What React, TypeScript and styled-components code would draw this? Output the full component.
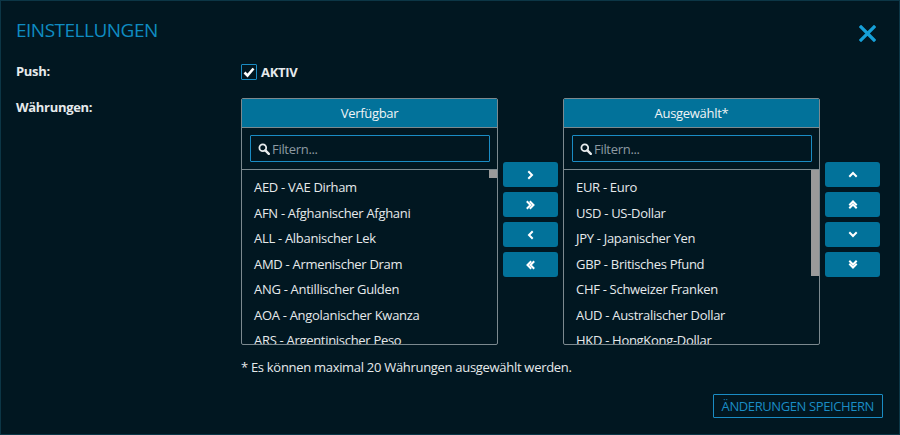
import React, { useLayoutEffect, useRef, useState } from 'react';
import styled, { createGlobalStyle } from 'styled-components';

const GlobalStyle = createGlobalStyle`
  html, body {
    margin: 0;
    padding: 0;
    background: #011721;
  }
  * {
    box-sizing: border-box;
  }
`;

const AVAILABLE = [
  'AED - VAE Dirham', 'AFN - Afghanischer Afghani', 'ALL - Albanischer Lek', 'AMD - Armenischer Dram',
  'ANG - Antillischer Gulden', 'AOA - Angolanischer Kwanza', 'ARS - Argentinischer Peso', 'AWG - Aruba-Florin',
  'AZN - Aserbaidschan-Manat', 'BAM - Konvertible Mark', 'BBD - Barbados-Dollar', 'BDT - Bangladesch-Taka',
  'BGN - Bulgarischer Lew', 'BHD - Bahrain-Dinar', 'BIF - Burundi-Franc', 'BMD - Bermuda-Dollar',
  'BND - Brunei-Dollar', 'BOB - Bolivianischer Boliviano', 'BRL - Brasilianischer Real', 'BSD - Bahama-Dollar',
  'BTN - Bhutan-Ngultrum', 'BWP - Botswanischer Pula', 'BYN - Weißrussischer Rubel', 'BZD - Belize-Dollar',
  'CDF - Kongo-Franc', 'CLP - Chilenischer Peso', 'CNY - Chinesischer Yuan', 'COP - Kolumbianischer Peso',
  'CRC - Costa-Rica-Colón', 'CUP - Kubanischer Peso', 'CVE - Kap-Verde-Escudo', 'CZK - Tschechische Krone',
  'DJF - Dschibuti-Franc', 'DOP - Dominikanischer Peso', 'DZD - Algerischer Dinar', 'EGP - Ägyptisches Pfund',
  'ERN - Eritreischer Nakfa', 'ETB - Äthiopischer Birr', 'FJD - Fidschi-Dollar', 'FKP - Falkland-Pfund',
  'GEL - Georgischer Lari', 'GHS - Ghanaischer Cedi', 'GIP - Gibraltar-Pfund', 'GMD - Gambischer Dalasi',
  'GNF - Guinea-Franc', 'GTQ - Guatemaltekischer Quetzal', 'GYD - Guyana-Dollar', 'HNL - Honduras-Lempira',
  'HRK - Kroatische Kuna', 'HTG - Haitianische Gourde', 'HUF - Ungarischer Forint', 'IDR - Indonesische Rupiah',
  'ILS - Israelischer Schekel', 'INR - Indische Rupie', 'IQD - Irakischer Dinar', 'IRR - Iranischer Rial',
  'ISK - Isländische Krone', 'JMD - Jamaika-Dollar', 'JOD - Jordanischer Dinar', 'KES - Kenia-Schilling',
  'KGS - Kirgisischer Som', 'KHR - Kambodschanischer Riel', 'KMF - Komoren-Franc', 'KPW - Nordkoreanischer Won',
  'KRW - Südkoreanischer Won', 'KWD - Kuwait-Dinar', 'KYD - Kaiman-Dollar', 'KZT - Kasachischer Tenge',
  'LAK - Laotischer Kip', 'LBP - Libanesisches Pfund', 'LKR - Sri-Lanka-Rupie', 'LRD - Liberianischer Dollar',
  'LSL - Lesothischer Loti', 'LYD - Libyscher Dinar', 'MAD - Marokkanischer Dirham', 'MDL - Moldauischer Leu',
  'MGA - Madagaskar-Ariary', 'MKD - Mazedonischer Denar', 'MMK - Myanmarischer Kyat', 'MNT - Mongolischer Tögrög',
  'MOP - Macao-Pataca', 'MRU - Mauretanischer Ouguiya', 'MUR - Mauritius-Rupie', 'MVR - Malediven-Rufiyaa',
  'MWK - Malawi-Kwacha', 'MXN - Mexikanischer Peso', 'MYR - Malaysischer Ringgit', 'MZN - Mosambik-Metical',
  'NAD - Namibia-Dollar', 'NGN - Nigerianischer Naira', 'NIO - Nicaragua-Córdoba', 'NPR - Nepalesische Rupie',
  'NZD - Neuseeland-Dollar', 'OMR - Omanischer Rial', 'PAB - Panamaischer Balboa', 'PEN - Peruanischer Sol',
  'PGK - Papua-Neuguinea-Kina', 'PHP - Philippinischer Peso', 'PKR - Pakistanische Rupie', 'PLN - Polnischer Złoty',
  'PYG - Paraguayischer Guaraní', 'QAR - Katar-Riyal', 'RON - Rumänischer Leu', 'RSD - Serbischer Dinar',
  'RUB - Russischer Rubel', 'RWF - Ruanda-Franc', 'SAR - Saudi-Rial', 'SBD - Salomonen-Dollar',
  'SCR - Seychellen-Rupie', 'SDG - Sudanesisches Pfund', 'SGD - Singapur-Dollar', 'SHP - St.-Helena-Pfund',
  'SLL - Sierra-leonischer Leone', 'SOS - Somalia-Schilling', 'SRD - Suriname-Dollar', 'SSP - Südsudanesisches Pfund',
  'STN - São-toméischer Dobra', 'SYP - Syrisches Pfund', 'SZL - Swasiländischer Lilangeni', 'THB - Thailändischer Baht',
  'TJS - Tadschikistan-Somoni', 'TMT - Turkmenistan-Manat', 'TND - Tunesischer Dinar', 'TOP - Tongaischer Paʻanga',
  'TRY - Türkische Lira', 'TTD - Trinidad-und-Tobago-Dollar', 'TWD - Neuer Taiwan-Dollar', 'TZS - Tansania-Schilling',
  'UAH - Ukrainische Hrywnja', 'UGX - Uganda-Schilling', 'UYU - Uruguayischer Peso', 'UZS - Usbekistan-Sum',
  'VES - Venezolanischer Bolívar', 'VND - Vietnamesischer Dong', 'VUV - Vanuatu-Vatu', 'WST - Samoanischer Tala',
  'XAF - CFA-Franc BEAC', 'XCD - Ostkaribischer Dollar', 'XOF - CFA-Franc BCEAO', 'XPF - CFP-Franc',
  'YER - Jemen-Rial', 'ZAR - Südafrikanischer Rand', 'ZMW - Sambischer Kwacha',
];

const SELECTED = [
  'EUR - Euro', 'USD - US-Dollar', 'JPY - Japanischer Yen', 'GBP - Britisches Pfund',
  'CHF - Schweizer Franken', 'AUD - Australischer Dollar', 'HKD - HongKong-Dollar',
  'CAD - Kanadischer Dollar', 'SEK - Schwedische Krone', 'NOK - Norwegische Krone',
  'DKK - Dänische Krone',
];

const Page = styled.div`
  display: flex;
  flex-direction: column;
  width: 100vw;
  height: 435px;
  padding: 16px 16px 16px 15px;
  border: 1px solid #0c3646;
  background: #011721;
  color: #e6eaec;
  font-family: 'Open Sans', 'Liberation Sans', sans-serif;
  font-size: 13px;
  letter-spacing: -0.3px;
`;

const Header = styled.div`
  display: flex;
  align-items: center;
  justify-content: space-between;
  height: 26px;
`;

const Title = styled.h1`
  margin: 0;
  font-size: 19px;
  font-weight: 400;
  line-height: 26px;
  letter-spacing: -0.5px;
  color: #0f8cc2;
`;

const CloseButton = styled.button`
  display: flex;
  align-items: center;
  justify-content: center;
  width: 20px;
  height: 20px;
  margin: 6px 6px 0 0;
  padding: 0;
  border: none;
  background: none;
  cursor: pointer;
`;

const Form = styled.div`
  display: grid;
  grid-template-columns: 225px 1fr;
  row-gap: 16px;
  margin-top: 19px;
`;

const Label = styled.div`
  font-weight: 700;
  line-height: 18px;
`;

const CheckLabel = styled.label`
  display: flex;
  align-items: center;
  gap: 4px;
  font-weight: 700;
  line-height: 20px;
  cursor: pointer;
`;

const CheckBox = styled.span`
  display: flex;
  align-items: center;
  justify-content: center;
  width: 16px;
  height: 16px;
  border: 1.5px solid #1a8cc4;
  border-radius: 1px;
`;

const Transfer = styled.div`
  display: grid;
  grid-template-columns: 257px 55px 257px 55px;
  column-gap: 5px;
`;

const Panel = styled.div`
  display: flex;
  flex-direction: column;
  height: 247px;
  border: 1px solid #7c898f;
  border-radius: 2px;
  overflow: hidden;
`;

const PanelHeader = styled.div`
  height: 29px;
  line-height: 28px;
  text-align: center;
  background: #02729a;
  color: #f0f4f6;
  border-bottom: 1px solid #7c898f;
`;

const FilterBar = styled.div`
  padding: 7px 7px 7px 8px;
  border-bottom: 1px solid #7c898f;
`;

const FilterBox = styled.div`
  display: flex;
  align-items: center;
  gap: 2px;
  height: 27px;
  padding: 0 7px;
  border: 1px solid #1a8cc4;
  border-radius: 1px;
`;

const FilterInput = styled.input`
  flex: 1;
  min-width: 0;
  border: none;
  outline: none;
  padding: 0;
  background: transparent;
  color: #e6eaec;
  font: inherit;
  letter-spacing: -0.3px;
  &::placeholder {
    color: #8d9aa2;
  }
`;

const ScrollArea = styled.div`
  position: relative;
  flex: 1;
  min-height: 0;
`;

const List = styled.ul`
  height: 100%;
  margin: 0;
  padding: 5px 0 0;
  list-style: none;
  overflow-y: auto;
  scrollbar-width: none;
  &::-webkit-scrollbar {
    display: none;
  }
`;

const Thumb = styled.div`
  position: absolute;
  right: 0;
  width: 8px;
  background: #9a9a9a;
`;

const Item = styled.li`
  height: 25.5px;
  line-height: 25.5px;
  padding-left: 12px;
  white-space: nowrap;
  cursor: pointer;
`;

const ButtonStack = styled.div`
  display: flex;
  flex-direction: column;
  gap: 5px;
  padding-top: 64px;
`;

const MoveButton = styled.button`
  display: flex;
  align-items: center;
  justify-content: center;
  height: 25px;
  padding: 0;
  border: none;
  border-radius: 3px;
  background: #02729a;
  cursor: pointer;
`;

const Note = styled.div`
  grid-column: 2;
  margin-top: -3px;
  line-height: 18px;
`;

const Footer = styled.div`
  display: flex;
  justify-content: flex-end;
  margin-top: auto;
`;

const SaveButton = styled.button`
  height: 24px;
  padding: 0 8px;
  border: 1px solid #1a8cc4;
  border-radius: 1px;
  background: transparent;
  color: #1a8cc4;
  font-family: 'Open Sans', 'Liberation Sans', sans-serif;
  font-size: 13px;
  letter-spacing: -0.4px;
  cursor: pointer;
`;

type Dir = 'right' | 'left' | 'up' | 'down';

const chevron: Record<Dir, string> = {
  right: 'M2 1 L5 4 L2 7',
  left: 'M5 1 L2 4 L5 7',
  up: 'M1 5 L4 2 L7 5',
  down: 'M1 2 L4 5 L7 2',
};

const Chevron = ({ dir, double }: { dir: Dir; double?: boolean }) => {
  const horizontal = dir === 'right' || dir === 'left';
  const shift = horizontal ? 'translate(3 0)' : 'translate(0 3)';
  const first = double ? (horizontal ? 'translate(-1.5 0)' : 'translate(0 -1.5)') : '';
  return (
    <svg width="10" height="10" viewBox="-1 -1 10 10" fill="none" stroke="#fff" strokeWidth="2" strokeLinecap="square">
      <path d={chevron[dir]} transform={first} />
      {double && <path d={chevron[dir]} transform={`${first} ${shift}`} />}
    </svg>
  );
};

const SearchIcon = () => (
  <svg width="12" height="12" viewBox="0 0 12 12" fill="none" stroke="#e6eaec">
    <circle cx="4.8" cy="4.8" r="3.4" strokeWidth="1.8" />
    <path d="M7.4 7.4 L10.8 10.8" strokeWidth="2.4" strokeLinecap="round" />
  </svg>
);

// list with a thin grey thumb, sized from the scroll height
const ScrollList = ({ items }: { items: string[] }) => {
  const ref = useRef<HTMLUListElement>(null);
  const [thumb, setThumb] = useState({ top: 0, height: 0 });

  const measure = () => {
    const el = ref.current;
    if (!el) return;
    const { clientHeight, scrollHeight, scrollTop } = el;
    if (scrollHeight <= clientHeight) {
      setThumb({ top: 0, height: 0 });
      return;
    }
    const height = Math.max(8, (clientHeight * clientHeight) / scrollHeight);
    const top = (scrollTop / (scrollHeight - clientHeight)) * (clientHeight - height);
    setThumb({ top, height });
  };

  useLayoutEffect(measure, [items]);

  return (
    <ScrollArea>
      <List ref={ref} onScroll={measure}>
        {items.map(item => (
          <Item key={item}>{item}</Item>
        ))}
      </List>
      {thumb.height > 0 && <Thumb style={{ top: thumb.top, height: thumb.height }} />}
    </ScrollArea>
  );
};

const CurrencyPanel = ({ title, items }: { title: string; items: string[] }) => {
  const [filter, setFilter] = useState('');
  const shown = items.filter(i => i.toLowerCase().includes(filter.toLowerCase()));
  return (
    <Panel>
      <PanelHeader>{title}</PanelHeader>
      <FilterBar>
        <FilterBox>
          <SearchIcon />
          <FilterInput placeholder="Filtern..." value={filter} onChange={e => setFilter(e.target.value)} />
        </FilterBox>
      </FilterBar>
      <ScrollList items={shown} />
    </Panel>
  );
};

const App: React.FC = () => {
  const [push, setPush] = useState(true);

  return (
    <>
      <GlobalStyle />
      <Page>
        <Header>
          <Title>EINSTELLUNGEN</Title>
          <CloseButton aria-label="Schließen">
            <svg width="17" height="17" viewBox="0 0 17 17" stroke="#16a0d8" strokeWidth="3.2" strokeLinecap="square">
              <path d="M2 2 L15 15 M15 2 L2 15" />
            </svg>
          </CloseButton>
        </Header>
        <Form>
          <Label>Push:</Label>
          <CheckLabel onClick={() => setPush(p => !p)}>
            <CheckBox>
              {push && (
                <svg width="12" height="11" viewBox="0 0 12 11" fill="none" stroke="#fff" strokeWidth="2.6">
                  <path d="M1.5 5.5 L4.5 8.5 L10.5 1.5" />
                </svg>
              )}
            </CheckBox>
            AKTIV
          </CheckLabel>
          <Label>Währungen:</Label>
          <Transfer>
            <CurrencyPanel title="Verfügbar" items={AVAILABLE} />
            <ButtonStack>
              <MoveButton><Chevron dir="right" /></MoveButton>
              <MoveButton><Chevron dir="right" double /></MoveButton>
              <MoveButton><Chevron dir="left" /></MoveButton>
              <MoveButton><Chevron dir="left" double /></MoveButton>
            </ButtonStack>
            <CurrencyPanel title="Ausgewählt*" items={SELECTED} />
            <ButtonStack>
              <MoveButton><Chevron dir="up" /></MoveButton>
              <MoveButton><Chevron dir="up" double /></MoveButton>
              <MoveButton><Chevron dir="down" /></MoveButton>
              <MoveButton><Chevron dir="down" double /></MoveButton>
            </ButtonStack>
          </Transfer>
          <Note>* Es können maximal 20 Währungen ausgewählt werden.</Note>
        </Form>
        <Footer>
          <SaveButton>ÄNDERUNGEN SPEICHERN</SaveButton>
        </Footer>
      </Page>
    </>
  );
};

export default App;
